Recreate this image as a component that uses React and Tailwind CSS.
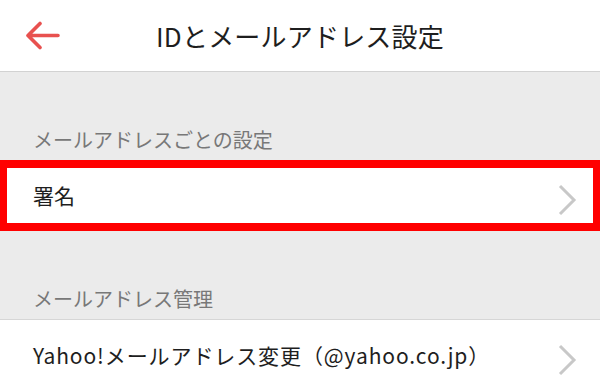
export default function App() {
  return (
    <div
      className="h-[390px] w-[600px] overflow-hidden bg-[#ebebeb]"
      style={{ fontFamily: '"Noto Sans CJK JP", "Noto Sans", sans-serif' }}
    >
      <header className="relative flex h-[72px] items-center justify-center border-b border-[#d2d2d2] bg-white">
        <button type="button" className="absolute left-[25px] top-[21px]">
          <svg width="36" height="30" viewBox="0 0 36 30" fill="none">
            <path
              d="M3 14.5H33M15 2.5L3 14.5L15 26.5"
              stroke="#e8514f"
              strokeWidth="3.6"
              strokeLinecap="round"
              strokeLinejoin="round"
            />
          </svg>
        </button>
        <h1 className="text-[26px] leading-none tracking-[0.2px] text-[#1e1e1e]">IDとメールアドレス設定</h1>
      </header>

      <SectionLabel>メールアドレスごとの設定</SectionLabel>
      <div className="flex h-[71px] items-center justify-between border-[7px] border-y-[8px] border-[#ff0000] bg-white pl-[26px] pr-[16px]">
        <span className="text-[21px] text-[#1e1e1e]">署名</span>
        <Chevron />
      </div>

      <SectionLabel>メールアドレス管理</SectionLabel>
      <div className="flex h-[72px] items-center justify-between border-t border-[#d6d6d6] bg-white pl-[33px] pr-[23px]">
        <span className="text-[21px] tracking-[0.9px] text-[#1e1e1e]">Yahoo!メールアドレス変更（@yahoo.co.jp）</span>
        <Chevron />
      </div>
    </div>
  );
}

function SectionLabel({ children }) {
  return (
    <div className="flex h-[88px] items-end px-[33px] pb-[9px]">
      <p className="text-[20px] leading-[22px] text-[#787878]">{children}</p>
    </div>
  );
}

function Chevron() {
  return (
    <svg width="20" height="32" viewBox="0 0 20 32" fill="none" className="mt-[8px]">
      <path d="M3 2L17 16L3 30" stroke="#c8c8c8" strokeWidth="3" />
    </svg>
  );
}
